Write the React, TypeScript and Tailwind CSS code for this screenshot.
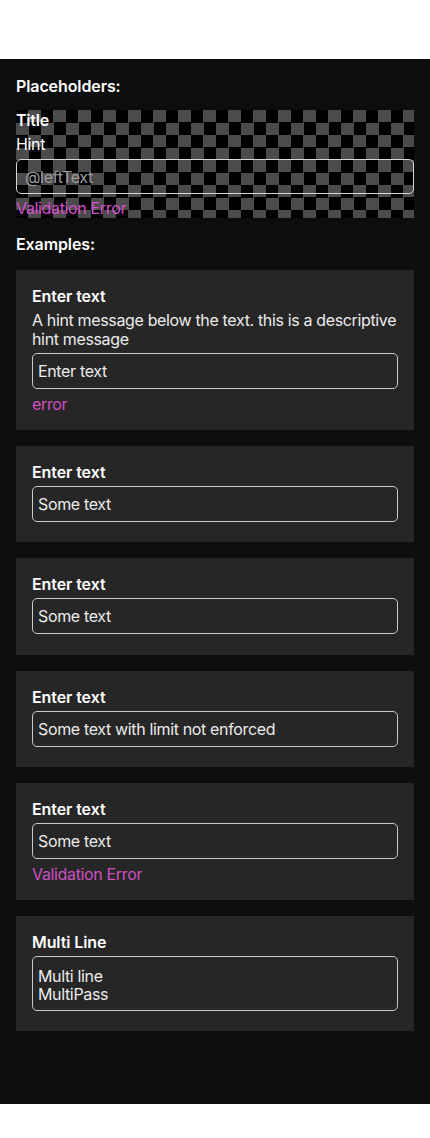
const FONT = "font-['Inter','Noto_Sans',sans-serif]";

function Field({ value, tall }: { value: string; tall?: boolean }) {
  if (tall) {
    return (
      <div className="mt-1 h-[55px] rounded-[5px] border border-[#c9c9c9] px-[5px] pt-[10px] text-[16px] leading-[18.5px] tracking-[-0.35px] text-[#ececec] whitespace-pre-line">
        {value}
      </div>
    );
  }
  return (
    <div className="mt-1 h-9 flex items-center rounded-[5px] border border-[#c9c9c9] px-[5px] text-[16px] tracking-[-0.35px] text-[#ececec]">
      {value}
    </div>
  );
}

function Card({
  title,
  hint,
  value,
  error,
  tall,
}: {
  title: string;
  hint?: string;
  value: string;
  error?: string;
  tall?: boolean;
}) {
  return (
    <div className={`bg-[#262626] px-4 pt-4 ${error ? "pb-[15.5px]" : "pb-[20.5px]"}`}>
      <div className="text-[16px] font-semibold leading-5 tracking-[-0.1px] text-white">{title}</div>
      {hint && (
        <div className="mt-[5px] text-[16px] leading-[19px] tracking-[-0.35px] text-[#ececec]">
          {hint}
        </div>
      )}
      <Field value={value} tall={tall} />
      {error && (
        <div className="mt-[5px] text-[16px] leading-5 tracking-[-0.35px] text-[#d04fc3]">{error}</div>
      )}
    </div>
  );
}

export default function App() {
  return (
    <div className={`bg-white min-h-[1138px] pt-[59px] ${FONT}`}>
      <div className="bg-[#0d0e0e] h-[1045px] px-4 pt-[17px]">
        <h2 className="text-[16px] font-semibold leading-5 tracking-[-0.1px] text-white">Placeholders:</h2>

        {/* checkerboard placeholder block */}
        <div className="mt-[14px] h-[108px] flex flex-col bg-[conic-gradient(#4b4b4b_25%,#000_0_50%,#4b4b4b_0_75%,#000_0)] bg-[length:25px_25px]">
          <div className="text-[16px] font-semibold leading-5 tracking-[-0.2px] text-white">Title</div>
          <div className="mt-1 text-[16px] leading-5 tracking-[-0.35px] text-white">Hint</div>
          <div className="mt-[5px] h-[35px] flex items-center rounded-[5px] border border-[#d6d6d6] px-[8px] text-[16px] tracking-[-0.35px] text-[#9c9c9c]">
            @leftText
          </div>
          <div className="mt-[5px] text-[16px] leading-[19px] tracking-[-0.35px] text-[#d64fcf]">
            Validation Error
          </div>
        </div>

        <h2 className="mt-4 text-[16px] font-semibold leading-5 tracking-[-0.1px] text-white">Examples:</h2>

        <div className="mt-4 flex flex-col gap-4">
          <Card
            title="Enter text"
            hint="A hint message below the text. this is a descriptive hint message"
            value="Enter text"
            error="error"
          />
          <Card title="Enter text" value="Some text" />
          <Card title="Enter text" value="Some text" />
          <Card title="Enter text" value="Some text with limit not enforced" />
          <Card title="Enter text" value="Some text" error="Validation Error" />
          <Card title="Multi Line" value={"Multi line\nMultiPass"} tall />
        </div>
      </div>
    </div>
  );
}
